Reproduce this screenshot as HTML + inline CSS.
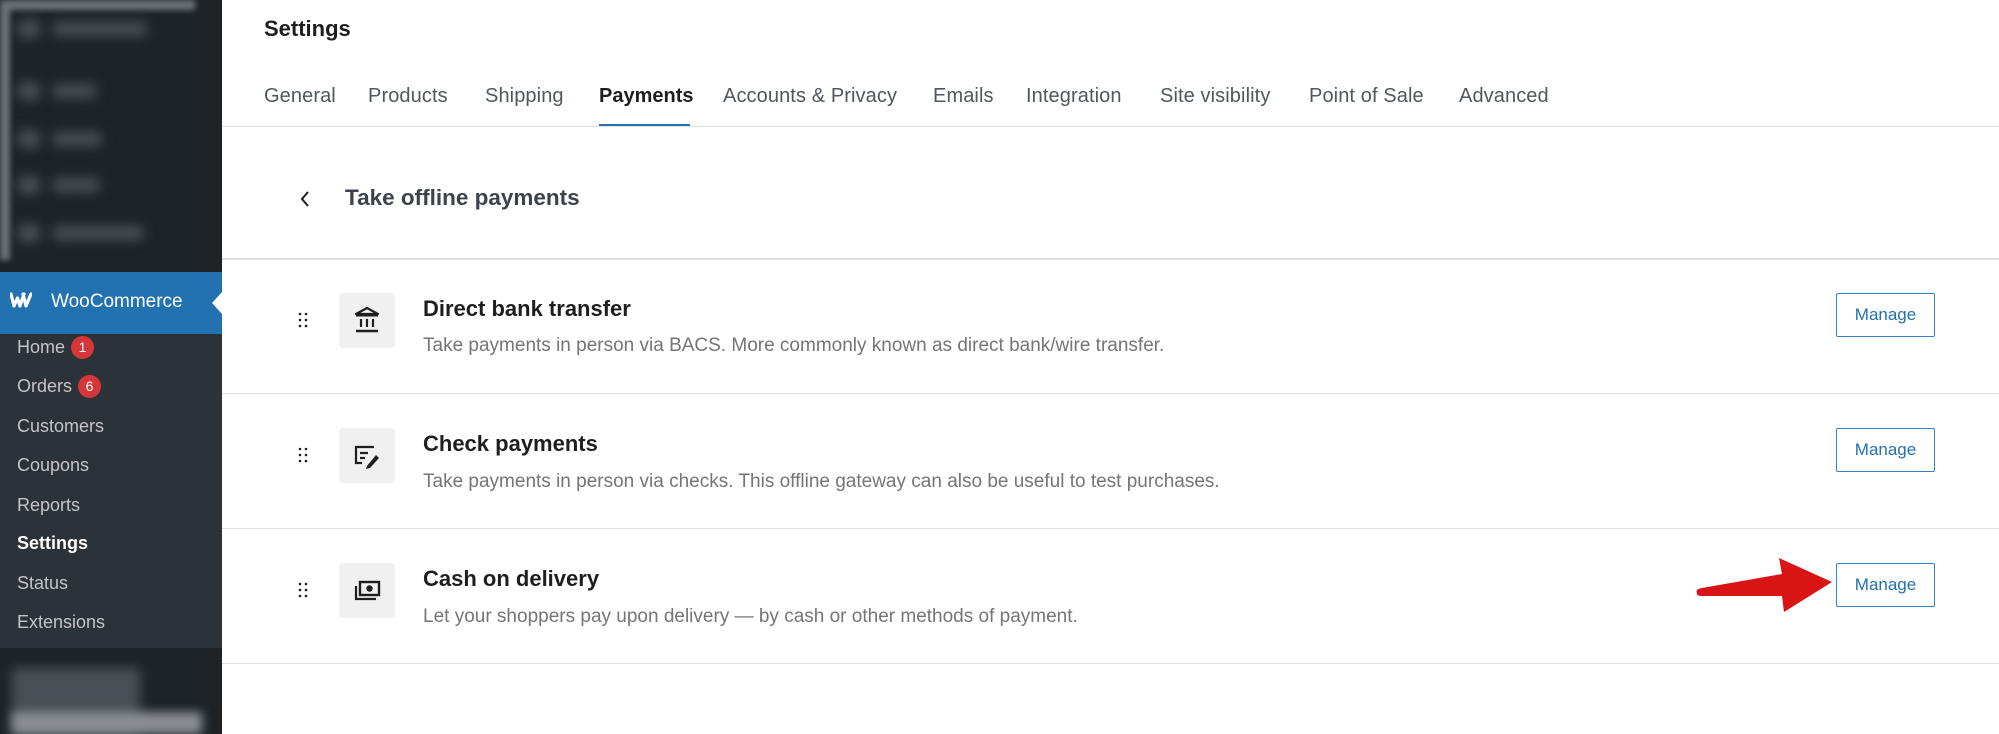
<!DOCTYPE html>
<html><head><meta charset="utf-8"><style>
*{margin:0;padding:0;box-sizing:border-box}
body{width:1999px;height:734px;overflow:hidden;background:#fff;font-family:"Liberation Sans",Arial,sans-serif;position:relative;color:#1e1e1e}
.abs{position:absolute}
#sb{left:0;top:0;width:222px;height:734px;background:#1d2327}
.blur{position:absolute;background:#4a5056;filter:blur(6px);border-radius:6px}
#woo{left:0;top:272px;width:222px;height:62px;background:#2271b1;color:#fff;font-size:19px}
#sub{left:0;top:334px;width:222px;height:314px;background:#2c3338}
.si{position:absolute;left:17px;font-size:18px;color:#c3c4c7;line-height:22px}
.badge{display:inline-block;width:23px;height:23px;border-radius:50%;background:#d63638;color:#fff;font-size:14px;text-align:center;line-height:23px;vertical-align:1px;margin-left:6px}
.tab{position:absolute;top:84px;font-size:20px;color:#50575e;line-height:24px;letter-spacing:0.1px}
.hr{position:absolute;left:222px;right:0;height:1px;background:#e0e0e0}
.ibox{position:absolute;left:339px;width:56px;height:55px;background:#f0f0f0;border-radius:4px}
.ttl{position:absolute;left:423px;font-size:22px;font-weight:bold;color:#1e1e1e}
.desc{position:absolute;left:423px;font-size:19px;color:#757575}
.btn{position:absolute;left:1836px;width:99px;height:44px;border:1.5px solid #3582c4;border-radius:2px;color:#2271b1;font-size:17px;text-align:center;line-height:41px}
.drag{position:absolute;left:298px;width:10px;height:16px}
</style></head><body>
<div id="sb" class="abs">
 <div class="abs" style="left:0;top:0;width:195px;height:260px;border-top:10px solid #80868b;border-left:10px solid #80868b;filter:blur(3px);opacity:.8"></div>
 <div class="blur" style="left:18px;top:20px;width:22px;height:18px"></div>
 <div class="blur" style="left:52px;top:22px;width:95px;height:14px"></div>
 <div class="blur" style="left:18px;top:82px;width:22px;height:18px"></div>
 <div class="blur" style="left:52px;top:84px;width:45px;height:14px"></div>
 <div class="blur" style="left:18px;top:130px;width:22px;height:18px"></div>
 <div class="blur" style="left:52px;top:132px;width:50px;height:14px"></div>
 <div class="blur" style="left:18px;top:176px;width:22px;height:18px"></div>
 <div class="blur" style="left:52px;top:178px;width:48px;height:14px"></div>
 <div class="blur" style="left:18px;top:224px;width:22px;height:18px"></div>
 <div class="blur" style="left:52px;top:226px;width:92px;height:14px"></div>
</div>
<div id="woo" class="abs">
 <svg class="abs" style="left:10px;top:20px" width="22" height="16" viewBox="0 0 22 16"><path d="M1 2 L4 14 L7.5 6 L10 14 L14 2 M13 2 L16 14 L21 2" fill="none" stroke="#fff" stroke-width="3.2" stroke-linejoin="round" stroke-linecap="round"/></svg>
 <div class="abs" style="left:51px;top:19px">WooCommerce</div>
 <div class="abs" style="left:212px;top:20px;width:0;height:0;border-top:11px solid transparent;border-bottom:11px solid transparent;border-right:10px solid #fff"></div>
</div>
<div id="sub" class="abs"></div>
<div class="si" style="top:336px">Home<span class="badge">1</span></div>
<div class="si" style="top:375px">Orders<span class="badge">6</span></div>
<div class="si" style="top:415px">Customers</div>
<div class="si" style="top:454px">Coupons</div>
<div class="si" style="top:494px">Reports</div>
<div class="si" style="top:532px;color:#fff;font-weight:bold">Settings</div>
<div class="si" style="top:572px">Status</div>
<div class="si" style="top:611px">Extensions</div>
<div class="blur" style="left:12px;top:668px;width:128px;height:66px;background:#4a5055;filter:blur(6px);border-radius:0"></div>
<div class="blur" style="left:12px;top:712px;width:190px;height:22px;background:#8a8f94;filter:blur(5px);border-radius:0"></div>

<div class="abs" style="left:264px;top:16px;font-size:22px;font-weight:bold;color:#1e1e1e">Settings</div>
<div class="tab" style="left:264px">General</div>
<div class="tab" style="left:368px">Products</div>
<div class="tab" style="left:485px">Shipping</div>
<div class="tab" style="left:599px;color:#1e1e1e;font-weight:bold;letter-spacing:0">Payments</div>
<div class="tab" style="left:723px">Accounts &amp; Privacy</div>
<div class="tab" style="left:933px">Emails</div>
<div class="tab" style="left:1026px">Integration</div>
<div class="tab" style="left:1160px">Site visibility</div>
<div class="tab" style="left:1309px">Point of Sale</div>
<div class="tab" style="left:1459px">Advanced</div>
<div class="abs" style="left:599px;top:124px;width:91px;height:3px;background:#2271b1"></div>
<div class="hr" style="top:126px"></div>

<svg class="abs" style="left:298px;top:189px" width="14" height="20" viewBox="0 0 14 20"><path d="M10 3 L4 10 L10 17" fill="none" stroke="#1e1e1e" stroke-width="2"/></svg>
<div class="abs" style="left:345px;top:185px;font-size:22.5px;font-weight:bold;color:#3c434a">Take offline payments</div>
<div class="hr" style="top:258px;height:2px"></div>

<svg class="drag" style="top:312px" viewBox="0 0 10 16"><g fill="#1e1e1e"><circle cx="2" cy="2" r="1.3"/><circle cx="8" cy="2" r="1.3"/><circle cx="2" cy="8" r="1.3"/><circle cx="8" cy="8" r="1.3"/><circle cx="2" cy="14" r="1.3"/><circle cx="8" cy="14" r="1.3"/></g></svg>
<div class="ibox" style="top:293px"><svg class="abs" style="left:14px;top:12px" width="28" height="30" viewBox="0 0 28 30"><path d="M3 9 L14 3 L25 9 Z" fill="none" stroke="#1e1e1e" stroke-width="2.2" stroke-linejoin="round"/><path d="M3 10.5 H25" stroke="#1e1e1e" stroke-width="2"/><path d="M8 14v8M14 14v8M20 14v8" stroke="#1e1e1e" stroke-width="2.2"/><path d="M3 26H25" stroke="#1e1e1e" stroke-width="2.4"/></svg></div>
<div class="ttl" style="top:296px">Direct bank transfer</div>
<div class="desc" style="top:335px">Take payments in person via BACS. More commonly known as direct bank/wire transfer.</div>
<div class="btn" style="top:293px">Manage</div>
<div class="hr" style="top:393px"></div>

<svg class="drag" style="top:447px" viewBox="0 0 10 16"><g fill="#1e1e1e"><circle cx="2" cy="2" r="1.3"/><circle cx="8" cy="2" r="1.3"/><circle cx="2" cy="8" r="1.3"/><circle cx="8" cy="8" r="1.3"/><circle cx="2" cy="14" r="1.3"/><circle cx="8" cy="14" r="1.3"/></g></svg>
<div class="ibox" style="top:428px"><svg class="abs" style="left:13px;top:14px" width="30" height="28" viewBox="0 0 30 28"><path d="M22 5 H4 V21 H10" fill="none" stroke="#1e1e1e" stroke-width="2.2"/><path d="M8 11H16M8 16H13" stroke="#1e1e1e" stroke-width="2.2"/><path d="M15 24 L24 13 L27 16 L18 26 L14 27 Z" fill="#1e1e1e"/></svg></div>
<div class="ttl" style="top:431px">Check payments</div>
<div class="desc" style="top:471px">Take payments in person via checks. This offline gateway can also be useful to test purchases.</div>
<div class="btn" style="top:428px">Manage</div>
<div class="hr" style="top:528px"></div>

<svg class="drag" style="top:582px" viewBox="0 0 10 16"><g fill="#1e1e1e"><circle cx="2" cy="2" r="1.3"/><circle cx="8" cy="2" r="1.3"/><circle cx="2" cy="8" r="1.3"/><circle cx="8" cy="8" r="1.3"/><circle cx="2" cy="14" r="1.3"/><circle cx="8" cy="14" r="1.3"/></g></svg>
<div class="ibox" style="top:563px"><svg class="abs" style="left:13px;top:14px" width="30" height="28" viewBox="0 0 30 28"><rect x="8" y="5" width="19" height="13" fill="none" stroke="#1e1e1e" stroke-width="2.4"/><circle cx="17.5" cy="11.5" r="3.2" fill="#1e1e1e"/><path d="M4 9 V22 H24" fill="none" stroke="#1e1e1e" stroke-width="2.2"/></svg></div>
<div class="ttl" style="top:566px">Cash on delivery</div>
<div class="desc" style="top:606px">Let your shoppers pay upon delivery — by cash or other methods of payment.</div>
<div class="btn" style="top:563px">Manage</div>
<div class="hr" style="top:663px"></div>

<svg class="abs" style="left:1690px;top:550px" width="150" height="66" viewBox="0 0 150 66"><path d="M7 43 Q5 39 12 38 L92 24 L89 8 L142 32 L94 62 L92 46 L12 46 Q6 46 7 43 Z" fill="#d81414"/></svg>
</body></html>
